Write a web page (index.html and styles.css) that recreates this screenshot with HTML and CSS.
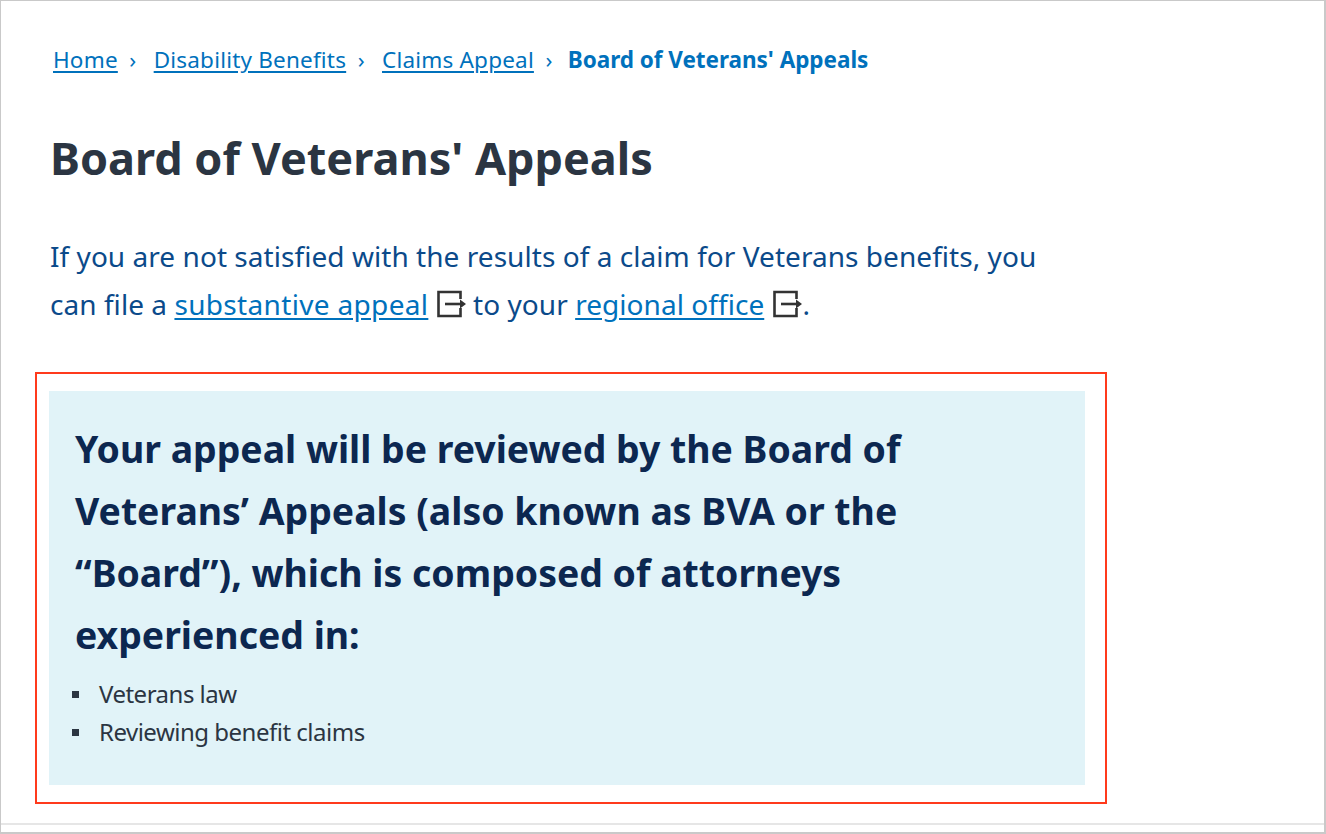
FILE: index.html
```html
<!DOCTYPE html>
<html>
<head>
    <title>Board of Veterans' Appeals</title>
    <link rel="stylesheet" href="styles.css">
</head>
<body>
    <div class="frame">
        <div class="page">
            <nav class="crumbs">
                <a href="#">Home</a><span class="sep">›</span>
                <a href="#">Disability Benefits</a><span class="sep">›</span>
                <a href="#">Claims Appeal</a><span class="sep">›</span>
                <b>Board of Veterans' Appeals</b>
            </nav>
            <h1>Board of Veterans' Appeals</h1>
            <p class="intro">If you are not satisfied with the results of a claim for Veterans benefits, you<br>
                can file a <a href="#">substantive appeal</a>
                <svg class="ext" viewBox="0 0 30 28"><path d="M24.5 9V2H2.5v24h22v-8" fill="none" stroke="#333" stroke-width="2.6"/><path d="M9 14h16" stroke="#333" stroke-width="2.6"/><path d="M24 9.5l6 4.5-6 4.5z" fill="#333"/></svg>
                to your <a href="#">regional office</a>
                <svg class="ext" viewBox="0 0 30 28"><path d="M24.5 9V2H2.5v24h22v-8" fill="none" stroke="#333" stroke-width="2.6"/><path d="M9 14h16" stroke="#333" stroke-width="2.6"/><path d="M24 9.5l6 4.5-6 4.5z" fill="#333"/></svg><span class="dot">.</span></p>
            <div class="callout-mark">
                <div class="callout">
                    <h2>Your appeal will be reviewed by the Board of<br>
                        Veterans’ Appeals (also known as BVA or the<br>
                        “Board”), which is composed of attorneys<br>
                        experienced in:</h2>
                    <ul>
                        <li>Veterans law</li>
                        <li>Reviewing benefit claims</li>
                    </ul>
                </div>
            </div>
        </div>
        <div class="rule"></div>
    </div>
</body>
</html>
```

FILE: styles.css
```css
:root {
    --link: #0071bc;
    --navy: #0c2750;
    --slate: #2b3542;
    --intro: #0b4a8a;
}
html, body { margin: 0; padding: 0; background: #fff; }
body { font-family: 'Noto Sans', 'Open Sans', sans-serif; color: var(--slate); }
.frame { box-sizing: border-box; height: 834px; border: 1px solid #c9c9c9; border-width: 1px 2px 2px 1px; display: flex; flex-direction: column; }
.page { flex: 1; padding: 44px 0 0 34px; }
a { color: var(--link); text-decoration: underline; text-underline-offset: 3px; }

.crumbs { font-size: 22.5px; line-height: 30px; padding-left: 18px; white-space: nowrap; color: var(--link); }
.crumbs a { letter-spacing: 0.2px; }
.crumbs .sep { margin: 0 11.5px; }
.crumbs b { font-weight: 700; margin-left: -2px; letter-spacing: -0.03px; }

h1 { margin: 53px 0 0 15px; font-size: 45px; line-height: 60px; font-weight: 700; color: var(--slate); }
.intro { margin: 44px 0 0 15px; font-size: 28px; line-height: 48px; letter-spacing: 0.05px; color: var(--intro); white-space: nowrap; }
.intro a:first-of-type { letter-spacing: 0.33px; }
.ext { width: 30px; height: 28px; vertical-align: -3px; }
.dot { margin-left: 1px; }

.callout-mark { box-sizing: border-box; width: 1072px; height: 432px; margin-top: 44px; border: 2px solid #ff3a1c; padding: 17px 20px 17px 12px; }
.callout { box-sizing: border-box; height: 394px; background: #e1f3f8; padding: 27px 26px; }
h2 { margin: 0; font-size: 37.4px; line-height: 62px; font-weight: 700; color: var(--navy); white-space: nowrap; }
ul { margin: 9px 0 0 -3px; padding: 0; list-style: none; font-size: 24px; line-height: 38px; letter-spacing: -0.5px; color: var(--slate); }
li { display: flex; align-items: center; gap: 20px; }
li::before { content: ""; width: 7px; height: 7px; background: var(--slate); }

.rule { height: 2px; background: #e6e6e6; margin-bottom: 7px; }
```
